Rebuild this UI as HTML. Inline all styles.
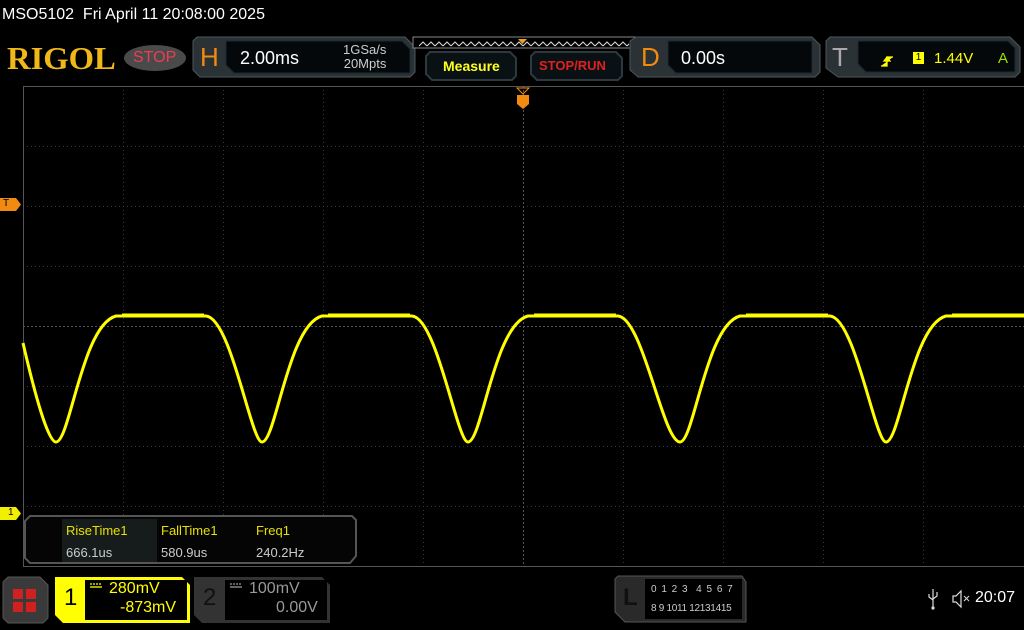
<!DOCTYPE html>
<html><head><meta charset="utf-8"><style>
html,body{margin:0;padding:0;background:#000;width:1024px;height:630px;overflow:hidden}
body{position:relative;font-family:"Liberation Sans","DejaVu Sans",sans-serif}
.a{position:absolute;white-space:nowrap}
</style></head><body>
<svg class="a" style="left:0;top:0" width="1024" height="630" viewBox="0 0 1024 630">
<defs>
<pattern id="zz" x="419" y="41" width="8" height="6" patternUnits="userSpaceOnUse">
<path d="M0,5 L4,1 L8,5" fill="none" stroke="#ddd" stroke-width="1"/>
</pattern>
</defs>
<path d="M124,58 a31,13 0 1 0 62,0 a31,13 0 1 0 -62,0z" fill="#4a4a4a"/>
<path d="M197,37 H405 L415,47 V72 L410,77 H200 L193,70 V41z" fill="#2a3236" stroke="#4b565c"/>
<path d="M226,41 H402 L410,49 V73 H234 L226,65z" fill="#05080a" stroke="#1b2a30"/>
<rect x="413" y="37" width="222" height="11" fill="#000" stroke="#888" stroke-width="1"/>
<rect x="419" y="41" width="210" height="6" fill="url(#zz)"/>
<path d="M518,39 h9 l-4.5,5z" fill="#f0a020"/>
<path d="M430,52 H510 L516,58 V76 L512,80 H432 L426,74 V56z" fill="#0a1114" stroke="#2c3a40" stroke-width="2"/>
<path d="M535,52 H616 L622,58 V76 L618,80 H537 L531,74 V56z" fill="#0a1114" stroke="#2c3a40" stroke-width="2"/>
<path d="M636,37 H812 L820,45 V72 L815,77 H638 L630,70 V41z" fill="#2a3236" stroke="#4b565c"/>
<path d="M668,41 H812 V73 H676 L668,65z" fill="#05080a" stroke="#1b2a30"/>
<path d="M830,37 H1010 L1020,47 V72 L1015,77 H838 L826,68 V41z" fill="#2a3236" stroke="#4b565c"/>
<path d="M858,41 H1008 L1015,48 V72 H866 L858,64z" fill="#05080a" stroke="#1b2a30"/>
<!-- trigger slope icon -->
<path d="M881,66 h6 v-9 h6 M884,61 l3,-4 l3,4z" fill="#ffff00" stroke="#ffff00" stroke-width="1.3"/>
<g stroke="#3a3a3a" stroke-width="1" stroke-dasharray="1 3">
<line x1="123.5" y1="86" x2="123.5" y2="566"/><line x1="223.5" y1="86" x2="223.5" y2="566"/>
<line x1="323.5" y1="86" x2="323.5" y2="566"/><line x1="423.5" y1="86" x2="423.5" y2="566"/>
<line x1="623.5" y1="86" x2="623.5" y2="566"/><line x1="723.5" y1="86" x2="723.5" y2="566"/>
<line x1="823.5" y1="86" x2="823.5" y2="566"/><line x1="923.5" y1="86" x2="923.5" y2="566"/>
<line x1="23" y1="146.5" x2="1024" y2="146.5"/><line x1="23" y1="206.5" x2="1024" y2="206.5"/>
<line x1="23" y1="266.5" x2="1024" y2="266.5"/><line x1="23" y1="386.5" x2="1024" y2="386.5"/>
<line x1="23" y1="446.5" x2="1024" y2="446.5"/><line x1="23" y1="506.5" x2="1024" y2="506.5"/>
</g>
<g stroke="#555" stroke-width="1">
<line x1="23" y1="86.5" x2="1024" y2="86.5"/><line x1="23" y1="566.5" x2="1024" y2="566.5"/>
<line x1="23.5" y1="86" x2="23.5" y2="566"/>
<line x1="523.5" y1="86" x2="523.5" y2="566" stroke-dasharray="2 2"/>
<line x1="23" y1="326.5" x2="1024" y2="326.5" stroke-dasharray="2 2"/>
</g>
<path d="M0,198 H16 L21,204.5 L16,211 H0z" fill="#f08a10"/>
<path d="M0,507 H16 L21,513.5 L16,520 H0z" fill="#f0f000"/>
<path d="M517,88 h12 l-6,6z" fill="none" stroke="#f08a10"/>
<path d="M517,95 h12 v9 l-6,5 l-6,-5z" fill="#f08a10"/>
<g fill="none" stroke="#ffff00" stroke-width="3" stroke-linejoin="round">
<path d="M23,343 C35,395 48,442 56,442 C70,442 82,325 116,316 L206,316 C231,318 251,442 262,442 C276,442 288,325 322,316 L412,316 C437,318 457,442 468,442 C482,442 494,325 528,316 L618,316 C643,318 663,442 680,442 C694,442 706,325 740,316 L830,316 C855,318 875,442 886,442 C900,442 912,325 946,316 L1024,316"/>
</g>
<g stroke="#ffff00" stroke-width="4">
<line x1="122" y1="315.5" x2="204" y2="315.5"/><line x1="328" y1="315.5" x2="410" y2="315.5"/><line x1="534" y1="315.5" x2="616" y2="315.5"/><line x1="746" y1="315.5" x2="828" y2="315.5"/><line x1="952" y1="315.5" x2="1024" y2="315.5"/>
</g>
<path d="M30,516 H352 L356,520 V556 L350,563 H30 L25,558 V521z" fill="#050505" stroke="#555" stroke-width="2"/>
<rect x="62" y="519" width="95" height="43" fill="#161b1b"/>
<path d="M8,577 H40 L48,585 V618 L43,623 H8 L3,618 V582z" fill="#3a3a3a" stroke="#555"/>
<g fill="#d02020"><rect x="13" y="589" width="10" height="10"/><rect x="26" y="589" width="10" height="10"/><rect x="13" y="602" width="10" height="10"/><rect x="26" y="602" width="10" height="10"/></g>
<path d="M55,577 H182 L190,585 V623 H63 L55,615z" fill="#ffff00"/>
<rect x="85" y="580" width="102" height="40" fill="#000"/>
<path d="M194,577 H322 L330,585 V623 H202 L194,615z" fill="#333"/>
<rect x="225" y="580" width="102" height="40" fill="#000"/>
<g stroke-width="1.3"><line x1="90" y1="584" x2="102" y2="584" stroke="#ffff00" stroke-dasharray="2 1"/><line x1="90" y1="587" x2="102" y2="587" stroke="#ffff00"/>
<line x1="230" y1="584" x2="242" y2="584" stroke="#999" stroke-dasharray="2 1"/><line x1="230" y1="587" x2="242" y2="587" stroke="#999"/></g>
<path d="M618,576 H742 L746,582 V622 H625 L615,612 V579z" fill="#2a2a2a" stroke="#555"/>
<rect x="645" y="579" width="97" height="40" fill="#000"/>
<g stroke="#ddd" stroke-width="1.2" fill="none"><line x1="933" y1="589" x2="933" y2="607"/><path d="M929,594 v3 l4,3 M937,592 v4 l-4,3"/></g>
<circle cx="933" cy="608" r="1.6" fill="#ddd"/>
<path d="M953,596 h3 l5,-5 v16 l-5,-5 h-3z" fill="none" stroke="#ddd" stroke-width="1.2"/>
<path d="M964,596 l5,5 M969,596 l-5,5" stroke="#ddd" stroke-width="1"/>
</svg>

<div class="a" style="left:2px;top:6px;color:#fff;font-size:16px">MSO5102&nbsp; Fri April 11 20:08:00 2025</div>
<div class="a" style="left:7px;top:40px;color:#f0b818;font-family:'Liberation Serif',serif;font-weight:bold;font-size:32px;transform:scaleX(1.02);transform-origin:left">RIGOL</div>
<div class="a" style="left:133px;top:49px;color:#e84050;font-size:16px">STOP</div>
<div class="a" style="left:200px;top:42px;color:#f08a10;font-size:26px">H</div>
<div class="a" style="left:240px;top:48px;color:#fff;font-size:18px">2.00ms</div>
<div class="a" style="left:343px;top:43px;color:#ccc;font-size:13px;line-height:14px;text-align:right">1GSa/s<br>20Mpts</div>
<div class="a" style="left:443px;top:58px;color:#ffff20;font-size:14px;font-weight:bold">Measure</div>
<div class="a" style="left:539px;top:58px;color:#e02020;font-size:13px;font-weight:bold">STOP/RUN</div>
<div class="a" style="left:641px;top:42px;color:#f08a10;font-size:26px">D</div>
<div class="a" style="left:681px;top:48px;color:#fff;font-size:18px">0.00s</div>
<div class="a" style="left:832px;top:42px;color:#aaa;font-size:26px">T</div>
<div class="a" style="left:913px;top:52px;width:11px;height:12px;background:#ffff00;color:#000;font-size:10px;text-align:center;line-height:12px">1</div>
<div class="a" style="left:934px;top:50px;color:#ffff00;font-size:15px">1.44V</div>
<div class="a" style="left:998px;top:50px;color:#9be000;font-size:15px">A</div>
<div class="a" style="left:3px;top:198px;color:#000;font-size:10px">T</div>
<div class="a" style="left:8px;top:507px;color:#000;font-size:10px">1</div>
<div class="a" style="left:66px;top:523px;color:#e8e000;font-size:13px">RiseTime1</div>
<div class="a" style="left:161px;top:523px;color:#e8e000;font-size:13px">FallTime1</div>
<div class="a" style="left:256px;top:523px;color:#e8e000;font-size:13px">Freq1</div>
<div class="a" style="left:66px;top:545px;color:#ccc;font-size:13px">666.1us</div>
<div class="a" style="left:161px;top:545px;color:#ccc;font-size:13px">580.9us</div>
<div class="a" style="left:256px;top:545px;color:#ccc;font-size:13px">240.2Hz</div>
<div class="a" style="left:64px;top:584px;color:#000;font-size:24px">1</div>
<div class="a" style="left:109px;top:580px;color:#ffff00;font-size:16px">280mV</div>
<div class="a" style="left:120px;top:599px;color:#ffff00;font-size:16px">-873mV</div>
<div class="a" style="left:203px;top:584px;color:#111;font-size:24px">2</div>
<div class="a" style="left:249px;top:580px;color:#999;font-size:16px">100mV</div>
<div class="a" style="left:276px;top:599px;color:#999;font-size:16px">0.00V</div>
<div class="a" style="left:623px;top:584px;color:#111;font-size:24px;font-weight:bold">L</div>
<div class="a" style="left:651px;top:584px;color:#ccc;font-size:10px;letter-spacing:1px">0 1 2 3&nbsp; 4 5 6 7</div>
<div class="a" style="left:651px;top:603px;color:#ccc;font-size:10px;letter-spacing:-0.3px">8 9 1011 12131415</div>
<div class="a" style="left:975px;top:589px;color:#fff;font-size:16px">20:07</div>
</body></html>
